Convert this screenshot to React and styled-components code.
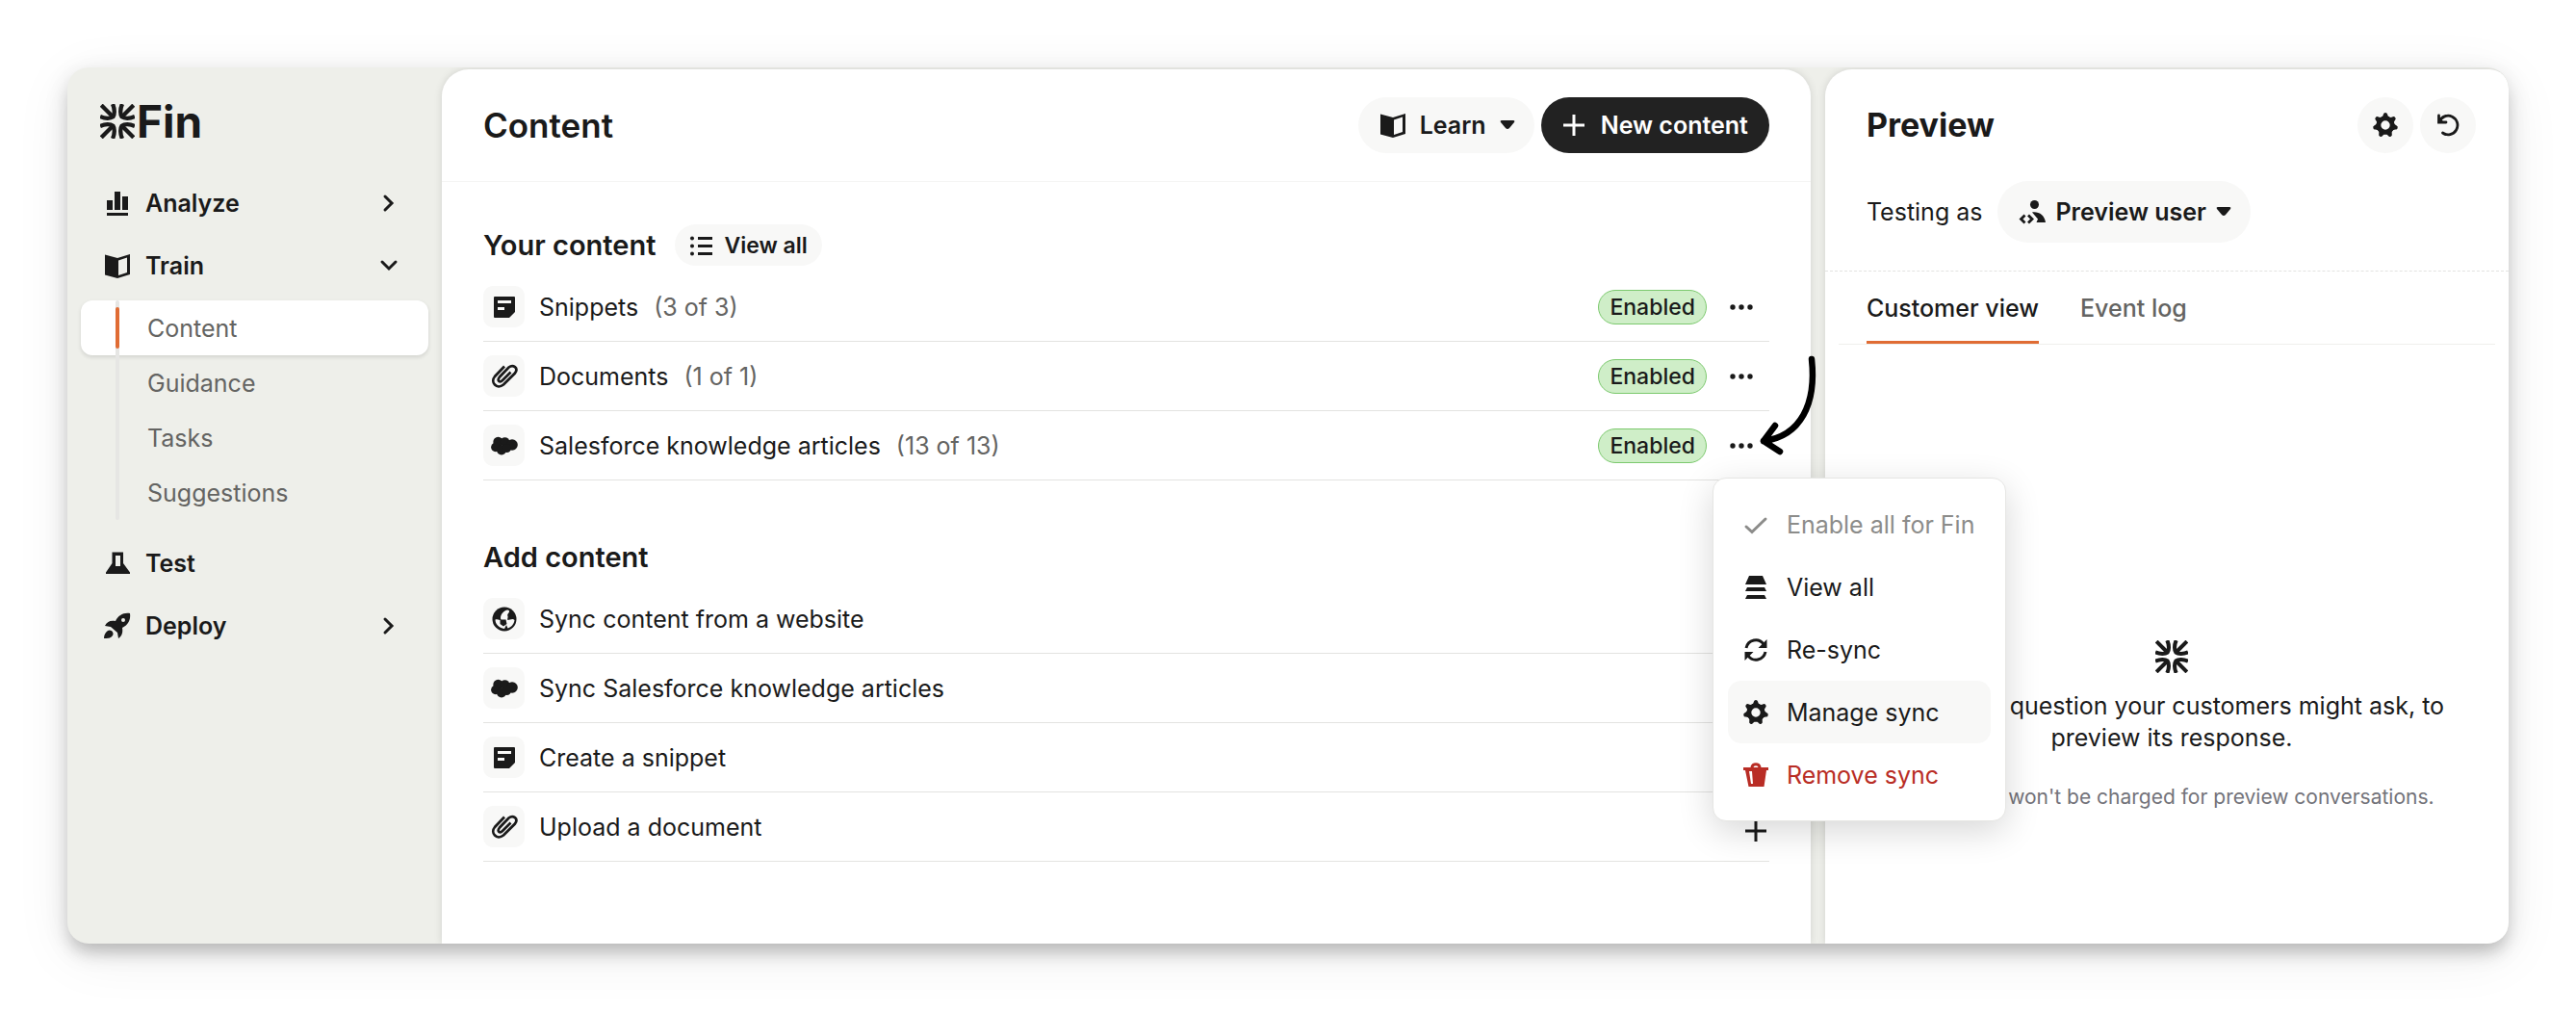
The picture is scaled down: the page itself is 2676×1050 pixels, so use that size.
import React from 'react';
import styled, { createGlobalStyle } from 'styled-components';

const GlobalStyle = createGlobalStyle`
    * {
        box-sizing: border-box;
    }

    body {
        margin: 0;
        background: #fff;
        color: #1a1a1a;
        font-family: Inter, "Liberation Sans", sans-serif;
        font-size: 25px;
        line-height: 34px;
    }

    button {
        font: inherit;
        color: inherit;
        border: 0;
        background: none;
        padding: 0;
        cursor: pointer;
    }

    a {
        color: inherit;
        text-decoration: none;
    }

    h1, h2, p, ul {
        margin: 0;
        padding: 0;
    }

    ul {
        list-style: none;
    }

    svg {
        display: block;
        flex: none;
    }
`;

const FinMark = ({ size }) => (
    <svg width={size} height={size} viewBox="0 0 36 36" fill="none" stroke="currentColor" strokeWidth="4.3" aria-hidden="true">
        {[0, 90, 180, 270].map((angle) => (
            <g key={angle} transform={`rotate(${angle} 18 18)`}>
                <path d="M1.2 1.2L13.5 13.5" />
                <path d="M13 0C15.4 5 15.2 11 13.4 13.4C11 15.2 5 15.4 0 13" />
            </g>
        ))}
    </svg>
);

const BarsIcon = () => (
    <svg width="28" height="28" viewBox="0 0 28 28" fill="currentColor" aria-hidden="true">
        <path d="M3 11h6v10H3zM11 2h6v19h-6zM19 7h6v14h-6zM3 24h22v3H3z" />
    </svg>
);

const BookIcon = () => (
    <svg width="28" height="28" viewBox="0 0 28 28" aria-hidden="true">
        <path fill="currentColor" fillRule="evenodd" d="M1 2.5L14 6L27 2V23L14 27L1 23.5ZM15 8.5V24L24 21V5.5Z" />
    </svg>
);

const FlaskIcon = () => (
    <svg width="28" height="28" viewBox="0 0 28 28" aria-hidden="true">
        <path fill="currentColor" fillRule="evenodd" d="M8.5 2.5H20V14L27 23.5V25H2V23.5L8.5 14ZM12 6V17H17V6Z" />
    </svg>
);

const RocketIcon = () => (
    <svg width="28" height="28" viewBox="0 0 28 28" fill="currentColor" aria-hidden="true">
        <path fillRule="evenodd" d="M27 1C20 0 15 3 12 9C6 8 3 10 1 14L7 15L14 21L15 27C18 25 20 22 19 16C25 13 28 8 27 1ZM20 6a2 2 0 1 1 0 4a2 2 0 0 1 0-4Z" />
        <path d="M4 19C7 17 11 21 9 24C7 27 4 27 0 27C0 24 1 21 4 19Z" />
    </svg>
);

const Chevron = ({ down }) => (
    <svg width="20" height="20" viewBox="0 0 20 20" fill="none" stroke="currentColor" strokeWidth="3" strokeLinecap="round" aria-hidden="true">
        <path d={down ? 'M3 6L10 13L17 6' : 'M6 3L13 10L6 17'} />
    </svg>
);

const CaretIcon = () => (
    <svg width="16" height="10" viewBox="0 0 16 10" fill="currentColor" aria-hidden="true">
        <path d="M1 2Q0 0 2 0H14Q16 0 15 2L10 8Q8 10 6 8Z" />
    </svg>
);

const PlusIcon = () => (
    <svg width="24" height="24" viewBox="0 0 24 24" stroke="currentColor" strokeWidth="3" aria-hidden="true">
        <path d="M12 1V23M1 12H23" />
    </svg>
);

const ListIcon = () => (
    <svg width="24" height="24" viewBox="0 0 24 24" fill="currentColor" aria-hidden="true">
        <path d="M9 3h15v3H9zM9 11h15v3H9zM9 19h15v3H9z" />
        <circle cx="3" cy="4.5" r="2" />
        <circle cx="3" cy="12.5" r="2" />
        <circle cx="3" cy="20.5" r="2" />
    </svg>
);

const SnippetIcon = () => (
    <svg width="28" height="28" viewBox="0 0 28 28" aria-hidden="true">
        <path fill="currentColor" fillRule="evenodd" d="M4 3H24Q25 3 25 4V19L19 25H4Q3 25 3 24V4Q3 3 4 3ZM7 7V10H21V7ZM7 14V17H14V14Z" />
    </svg>
);

const ClipIcon = () => (
    <svg width="28" height="28" viewBox="0 0 28 28" fill="none" stroke="currentColor" strokeWidth="2.7" aria-hidden="true">
        <path d="M14 3.5L4 14C-1 20 6 28 13 22.5L25 10.5C29 5 23 1 18.5 4.5L9 14.5C5.5 19 9.5 20.5 12 18L20.5 9.5" />
    </svg>
);

const CloudIcon = () => (
    <svg width="28" height="28" viewBox="0 0 28 28" fill="currentColor" aria-hidden="true">
        <circle cx="7.5" cy="10" r="5.2" />
        <circle cx="14.5" cy="10" r="4.8" />
        <circle cx="22" cy="13" r="5.8" />
        <circle cx="4.8" cy="15.5" r="4.7" />
        <circle cx="11" cy="18.5" r="5" />
        <circle cx="16.5" cy="16.5" r="4.5" />
    </svg>
);

const GlobeIcon = () => (
    <svg width="28" height="28" viewBox="0 0 28 28" aria-hidden="true">
        <circle cx="14" cy="14" r="12.5" fill="currentColor" />
        <path fill="#f8f8f7" d="M14.5 5.5C17 3.5 19.5 4.5 19 6.5C18.5 8 16.5 9 17.5 11C18 12.5 16.5 14 17.5 15C20 15 22.5 13 24.5 15C24 19 21 22.5 17.5 23.5L16 20L14 24C8 23 4.5 19 4.5 14.5C7 13.5 8.5 15 10.5 15C9 11 11.5 7.5 14.5 5.5Z" />
        <path fill="currentColor" d="M9.5 14.5H15.5L16.5 19L13 21.5L9.5 19Z" />
    </svg>
);

const DotsIcon = () => (
    <svg width="28" height="28" viewBox="0 0 28 28" fill="currentColor" aria-hidden="true">
        <circle cx="5" cy="14" r="2.7" />
        <circle cx="14" cy="14" r="2.7" />
        <circle cx="23" cy="14" r="2.7" />
    </svg>
);

const GearIcon = () => (
    <svg width="28" height="28" viewBox="0 0 28 28" aria-hidden="true">
        <circle cx="14" cy="14" r="7.2" fill="none" stroke="currentColor" strokeWidth="5" />
        {[0, 1, 2, 3, 4, 5, 6].map((n) => (
            <path key={n} fill="currentColor" transform={`rotate(${n * 360 / 7} 14 14)`} d="M9.5 6.5Q11.8 4.5 12 2.5Q12.2 1 14 1Q15.8 1 16 2.5Q16.2 4.5 18.5 6.5Z" />
        ))}
    </svg>
);

const UndoIcon = () => (
    <svg width="28" height="28" viewBox="0 0 28 28" fill="none" stroke="currentColor" strokeWidth="2.8" strokeLinecap="round" aria-hidden="true">
        <path d="M4.5 4V11H12" />
        <path d="M5 10.5A9.8 9.8 0 1 1 8.5 22" />
        <path fill="currentColor" stroke="none" d="M5 6L10 11H5Z" />
    </svg>
);

const UserCodeIcon = () => (
    <svg width="28" height="28" viewBox="0 0 28 28" aria-hidden="true">
        <circle cx="16.5" cy="6.5" r="4.5" fill="currentColor" />
        <path fill="currentColor" d="M14 14.5C21 13.5 27 17.5 28 25H18.5L20 21.5Z" />
        <path fill="none" stroke="currentColor" strokeWidth="2.8" d="M6.5 17.5L2.5 21.5L6.5 25.5M10 17.5L14 21.5L10 25.5" />
    </svg>
);

const CheckIcon = () => (
    <svg width="28" height="28" viewBox="0 0 28 28" fill="none" stroke="currentColor" strokeWidth="3" strokeLinecap="round" aria-hidden="true">
        <path d="M4 16L10 21.5L24 8" />
    </svg>
);

const StackIcon = () => (
    <svg width="28" height="28" viewBox="0 0 28 28" fill="currentColor" aria-hidden="true">
        <path d="M7 2H21L25 11H3ZM5 14H23L25 18H3ZM5 22H23L25 26H3Z" />
    </svg>
);

const SyncIcon = () => (
    <svg width="28" height="28" viewBox="0 0 28 28" aria-hidden="true">
        <path fill="none" stroke="currentColor" strokeWidth="3" d="M4 12C6 3 17 1 22 8M24 16C22 25 11 27 6 20" />
        <path fill="currentColor" d="M25.5 3V12H16.5ZM2.5 25V16H11.5Z" />
    </svg>
);

const TrashIcon = () => (
    <svg width="28" height="28" viewBox="0 0 28 28" aria-hidden="true">
        <path fill="none" stroke="currentColor" strokeWidth="3" d="M10 7V6C10 1.5 18 1.5 18 6V7" />
        <path fill="currentColor" fillRule="evenodd" d="M1 6H27V9H25L22.5 26H6.5L3 9H1ZM7 10L9 23H11L10 10Z" />
    </svg>
);

// hand-drawn arrow that points at the open row menu
const Pointer = () => (
    <PointerSvg width="64" height="108" viewBox="0 0 64 108" fill="none" stroke="#000" strokeWidth="6.5" strokeLinecap="round" strokeLinejoin="round" aria-hidden="true">
        <path d="M56 6C61 52 45 86 6 91M18 75L6 91L23 102" />
    </PointerSvg>
);

const navItems = [
    { label: 'Analyze', icon: <BarsIcon />, arrow: true },
    { label: 'Train', icon: <BookIcon />, arrow: true, children: ['Content', 'Guidance', 'Tasks', 'Suggestions'] },
    { label: 'Test', icon: <FlaskIcon /> },
    { label: 'Deploy', icon: <RocketIcon />, arrow: true },
];

const sources = [
    { label: 'Snippets', count: '(3 of 3)', icon: <SnippetIcon /> },
    { label: 'Documents', count: '(1 of 1)', icon: <ClipIcon /> },
    { label: 'Salesforce knowledge articles', count: '(13 of 13)', icon: <CloudIcon />, menu: true },
];

const additions = [
    { label: 'Sync content from a website', icon: <GlobeIcon /> },
    { label: 'Sync Salesforce knowledge articles', icon: <CloudIcon /> },
    { label: 'Create a snippet', icon: <SnippetIcon /> },
    { label: 'Upload a document', icon: <ClipIcon /> },
];

const SourceMenu = () => (
    <Menu>
        <MenuItem disabled><CheckIcon />Enable all for Fin</MenuItem>
        <MenuItem><StackIcon />View all</MenuItem>
        <MenuItem><SyncIcon />Re-sync</MenuItem>
        <MenuItem $active><GearIcon />Manage sync</MenuItem>
        <MenuItem $danger><TrashIcon />Remove sync</MenuItem>
    </Menu>
);

const App = () => {
    return (
        <Page>
            <GlobalStyle />
            <Window>
                <Sidebar>
                    <Logo href="#"><FinMark size={36} />Fin</Logo>
                    {navItems.map((item) => (
                        <React.Fragment key={item.label}>
                            <NavItem>
                                {item.icon}
                                <span>{item.label}</span>
                                {item.arrow && <Chevron down={!!item.children} />}
                            </NavItem>
                            {item.children && (
                                <SubNav>
                                    {item.children.map((child, i) => (
                                        <li key={child}><SubLink href="#" $active={i === 0}>{child}</SubLink></li>
                                    ))}
                                </SubNav>
                            )}
                        </React.Fragment>
                    ))}
                </Sidebar>
                <Main>
                    <Header>
                        <Title>Content</Title>
                        <Pill><BookIcon />Learn<CaretIcon /></Pill>
                        <Pill $dark><PlusIcon />New content</Pill>
                    </Header>
                    <Body>
                        <SectionHead>
                            <SectionTitle>Your content</SectionTitle>
                            <SmallPill><ListIcon />View all</SmallPill>
                        </SectionHead>
                        <ul>
                            {sources.map((row) => (
                                <Row key={row.label}>
                                    <IconBox>{row.icon}</IconBox>
                                    {row.label}
                                    <Count>{row.count}</Count>
                                    <Badge>Enabled</Badge>
                                    <MoreButton aria-label={`${row.label} options`}><DotsIcon /></MoreButton>
                                    {row.menu && <Pointer />}
                                    {row.menu && <SourceMenu />}
                                </Row>
                            ))}
                        </ul>
                        <SectionHead $second>
                            <SectionTitle>Add content</SectionTitle>
                        </SectionHead>
                        <ul>
                            {additions.map((row) => (
                                <Row key={row.label}>
                                    <IconBox>{row.icon}</IconBox>
                                    {row.label}
                                    <AddButton aria-label={row.label}><PlusIcon /></AddButton>
                                </Row>
                            ))}
                        </ul>
                    </Body>
                </Main>
                <Preview>
                    <PreviewHead>
                        <Title $bold>Preview</Title>
                        <RoundButton aria-label="Settings"><GearIcon /></RoundButton>
                        <RoundButton aria-label="Restart"><UndoIcon /></RoundButton>
                    </PreviewHead>
                    <Testing>
                        Testing as
                        <UserPill><UserCodeIcon />Preview user<CaretIcon /></UserPill>
                    </Testing>
                    <Tabs>
                        <Tab $active>Customer view</Tab>
                        <Tab>Event log</Tab>
                    </Tabs>
                    <Empty>
                        <FinMark size={34} />
                        <Prompt>Ask Fin a question your customers might ask, to preview its response.</Prompt>
                        <Note>Note: You won't be charged for preview conversations.</Note>
                    </Empty>
                </Preview>
            </Window>
        </Page>
    )
}

export default App;

const Page = styled.div`
    padding: 70px;
`

const Window = styled.div`
    display: grid;
    grid-template-columns: 389px minmax(0, 1fr) 28%;
    min-height: calc(100vh - 140px);
    border-radius: 22px;
    background: #eeefea;
    box-shadow: 0 12px 16px -4px rgba(0, 0, 0, 0.14), 0 8px 24px rgba(0, 0, 0, 0.14), 0 12px 60px rgba(0, 0, 0, 0.07);
    overflow: hidden;
`

const Sidebar = styled.nav`
    padding: 30px 14px;
`

const Logo = styled.a`
    display: flex;
    align-items: center;
    gap: 2px;
    height: 52px;
    margin: 0 0 26px 20px;
    font-size: 46px;
    font-weight: 700;
`

const NavItem = styled.button`
    display: flex;
    align-items: center;
    gap: 15px;
    width: 100%;
    height: 65px;
    padding: 0 31px 0 24px;
    font-weight: 600;
    text-align: left;

    span {
        flex: 1;
    }
`

const SubNav = styled.ul`
    position: relative;
    margin: 4px 0 12px;

    &::before {
        content: '';
        position: absolute;
        left: 36px;
        top: 0;
        bottom: 0;
        width: 4px;
        border-radius: 2px;
        background: #e6e6e4;
        z-index: 1;
    }
`

const SubLink = styled.a`
    position: relative;
    display: flex;
    align-items: center;
    height: 57px;
    padding-left: 69px;
    border-radius: 12px;
    color: #646462;
    background: ${({ $active }) => ($active ? '#fff' : 'none')};
    box-shadow: ${({ $active }) => ($active ? '0 2px 4px rgba(0, 0, 0, 0.12)' : 'none')};

    &::before {
        content: '';
        display: ${({ $active }) => ($active ? 'block' : 'none')};
        position: absolute;
        left: 36px;
        top: 7px;
        bottom: 7px;
        width: 4px;
        border-radius: 2px;
        background: #e06c34;
        z-index: 2;
    }
`

const Main = styled.main`
    position: relative;
    z-index: 1;
    margin: 2px 15px 0 0;
    border-radius: 28px 28px 0 0;
    background: #fff;
    box-shadow: 0 0 8px rgba(0, 0, 0, 0.12);
`

const Header = styled.header`
    display: flex;
    align-items: center;
    gap: 7px;
    height: 117px;
    padding: 0 43px;
    border-bottom: 1px solid #f5f5f4;
`

const Title = styled.h1`
    flex: 1;
    font-size: ${({ $bold }) => ($bold ? '34px' : '35px')};
    line-height: 44px;
    font-weight: ${({ $bold }) => ($bold ? 700 : 600)};
`

const Pill = styled.button`
    display: flex;
    align-items: center;
    gap: ${({ $dark }) => ($dark ? '16px' : '14px')};
    height: 58px;
    padding: ${({ $dark }) => ($dark ? '0 22px' : '0 20px 0 22px')};
    border-radius: 29px;
    font-weight: 600;
    color: ${({ $dark }) => ($dark ? '#fff' : '#1a1a1a')};
    background: ${({ $dark }) => ($dark ? '#222' : '#f8f8f7')};
`

const SmallPill = styled(Pill)`
    gap: 12px;
    height: 43px;
    padding: 0 15px;
    font-size: 23px;
`

const Body = styled.div`
    padding: 44px 43px;
`

const SectionHead = styled.div`
    display: flex;
    align-items: center;
    gap: 20px;
    height: 43px;
    margin-top: ${({ $second }) => ($second ? '58px' : '0')};
    margin-bottom: 7px;
`

const SectionTitle = styled.h2`
    font-size: 29px;
    line-height: 36px;
    font-weight: 600;
`

const Row = styled.li`
    position: relative;
    display: flex;
    align-items: center;
    height: 72px;
    border-bottom: 1px solid #e3e3e1;
`

const IconBox = styled.span`
    display: grid;
    place-items: center;
    width: 43px;
    height: 43px;
    margin-right: 15px;
    border-radius: 10px;
    background: #f8f8f7;
`

const Count = styled.span`
    margin-left: 16px;
    color: #646462;
`

const Badge = styled.span`
    height: 36px;
    margin-left: auto;
    padding: 0 11px;
    border: 1px solid #7cc96e;
    border-radius: 18px;
    background: #cfeec8;
    font-size: 23px;
    font-weight: 500;
`

const MoreButton = styled.button`
    margin: 0 15px 0 22px;
`

const AddButton = styled.button`
    margin: 8px 2px 0 auto;
`

const PointerSvg = styled.svg`
    position: absolute;
    right: -52px;
    top: -60px;
`

const Menu = styled.div`
    position: absolute;
    z-index: 5;
    top: 69px;
    right: -246px;
    width: 305px;
    padding: 15px;
    border: 1px solid #e6e6e4;
    border-radius: 14px;
    background: #fff;
    box-shadow: 0 10px 36px rgba(0, 0, 0, 0.16);
`

const MenuItem = styled.button`
    display: flex;
    align-items: center;
    gap: 18px;
    width: 100%;
    height: 65px;
    padding: 0 15px;
    border-radius: 14px;
    white-space: nowrap;
    color: ${({ $danger, disabled }) => ($danger ? '#b92d25' : disabled ? '#8c8c8a' : '#1a1a1a')};
    background: ${({ $active }) => ($active ? '#f8f8f7' : 'none')};
`

const Preview = styled.aside`
    display: flex;
    flex-direction: column;
    margin-top: 2px;
    border-radius: 28px 20px 0 0;
    background: #fff;
    box-shadow: 0 0 8px rgba(0, 0, 0, 0.12);
`

const PreviewHead = styled.div`
    display: flex;
    align-items: center;
    gap: 7px;
    height: 116px;
    padding: 0 34px 0 43px;
`

const RoundButton = styled.button`
    display: grid;
    place-items: center;
    width: 58px;
    height: 58px;
    border-radius: 50%;
    background: #f8f8f7;
`

const Testing = styled.div`
    display: flex;
    align-items: center;
    gap: 16px;
    padding: 0 43px 29px;
    border-bottom: 1px dashed #e3e3e1;
`

const UserPill = styled(Pill)`
    gap: 10px;
    height: 64px;
    border-radius: 32px;
`

const Tabs = styled.div`
    display: flex;
    gap: 43px;
    margin: 0 14px;
    padding: 0 29px;
    border-bottom: 1px solid #efefed;
`

const Tab = styled.button`
    height: 75px;
    padding-top: 4px;
    border-bottom: 3px solid ${({ $active }) => ($active ? '#e06c34' : 'transparent')};
    font-weight: 500;
    color: ${({ $active }) => ($active ? '#1a1a1a' : '#646462')};
`

const Empty = styled.div`
    display: flex;
    flex: 1;
    flex-direction: column;
    align-items: center;
    justify-content: center;
    padding: 172px 50px 0 60px;
    text-align: center;
`

const Prompt = styled.p`
    margin: 18px 0 28px;
    line-height: 33px;
`

const Note = styled.p`
    font-size: 21px;
    color: #73737a;
`
